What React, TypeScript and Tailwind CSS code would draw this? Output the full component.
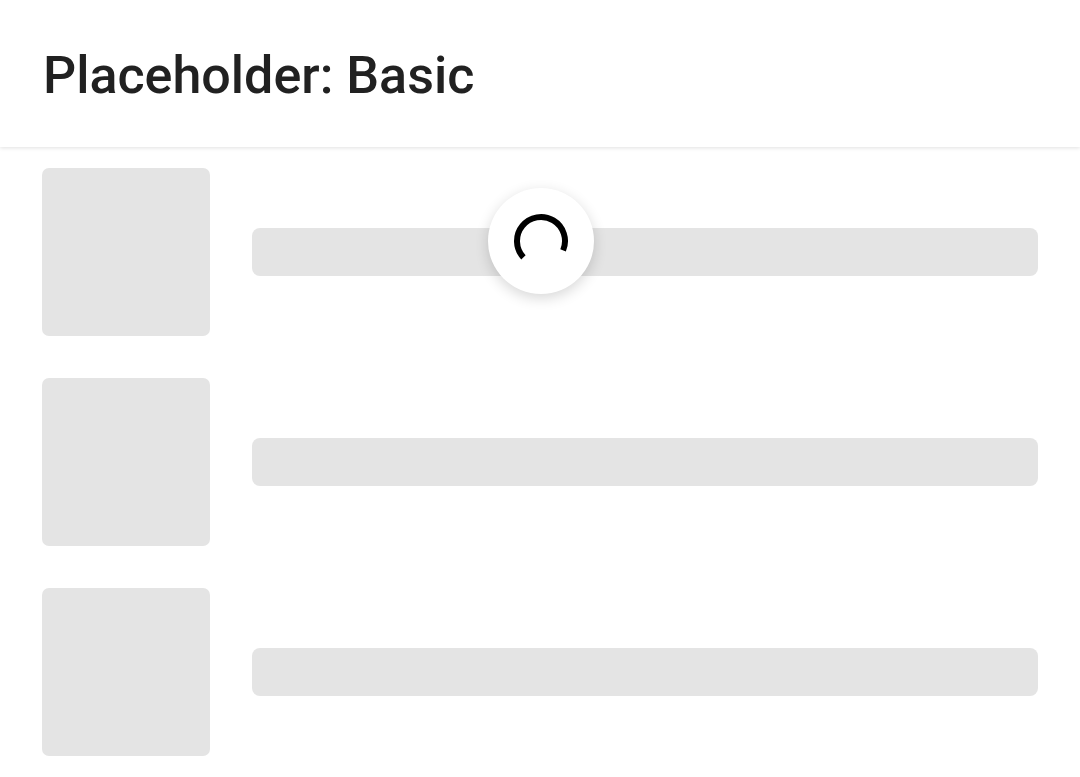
import React from 'react'

const rows = [0, 1, 2]

function Spinner() {
  // arc from ~137deg around the top to ~23deg, leaving a gap at the bottom
  const r = 24
  const a1 = (137 * Math.PI) / 180
  const a2 = (23 * Math.PI) / 180
  const x1 = 30 + r * Math.cos(a1)
  const y1 = 30 + r * Math.sin(a1)
  const x2 = 30 + r * Math.cos(a2)
  const y2 = 30 + r * Math.sin(a2)
  return (
    <svg width="60" height="60" viewBox="0 0 60 60">
      <path
        d={`M ${x1} ${y1} A ${r} ${r} 0 1 1 ${x2} ${y2}`}
        fill="none"
        stroke="#000"
        strokeWidth="6"
      />
    </svg>
  )
}

export default function App() {
  return (
    <div className="relative min-h-[777px] bg-white overflow-hidden" style={{ fontFamily: 'Roboto, "Noto Sans", sans-serif' }}>
      {/* Header */}
      <header className="h-[147px] flex items-center px-[43px] bg-white shadow-[0_1px_4px_rgba(0,0,0,0.12)] relative z-10">
        <h1 className="text-[52px] font-medium leading-none text-[#212121] pt-[4px]">Placeholder: Basic</h1>
      </header>

      {/* Placeholder list */}
      <div className="flex flex-col gap-[42px] px-[42px] pt-[21px]">
        {rows.map(i => (
          <div key={i} className="flex items-center gap-[42px]">
            <div className="w-[168px] h-[168px] shrink-0 rounded-[7px] bg-[#e4e4e4]" />
            <div className="flex-1 h-[48px] rounded-[8px] bg-[#e4e4e4]" />
          </div>
        ))}
      </div>

      {/* Refresher */}
      <div className="absolute left-[488px] top-[188px] z-20 w-[106px] h-[106px] rounded-full bg-white shadow-[0_4px_14px_rgba(0,0,0,0.16)] flex items-center justify-center">
        <Spinner />
      </div>
    </div>
  )
}
